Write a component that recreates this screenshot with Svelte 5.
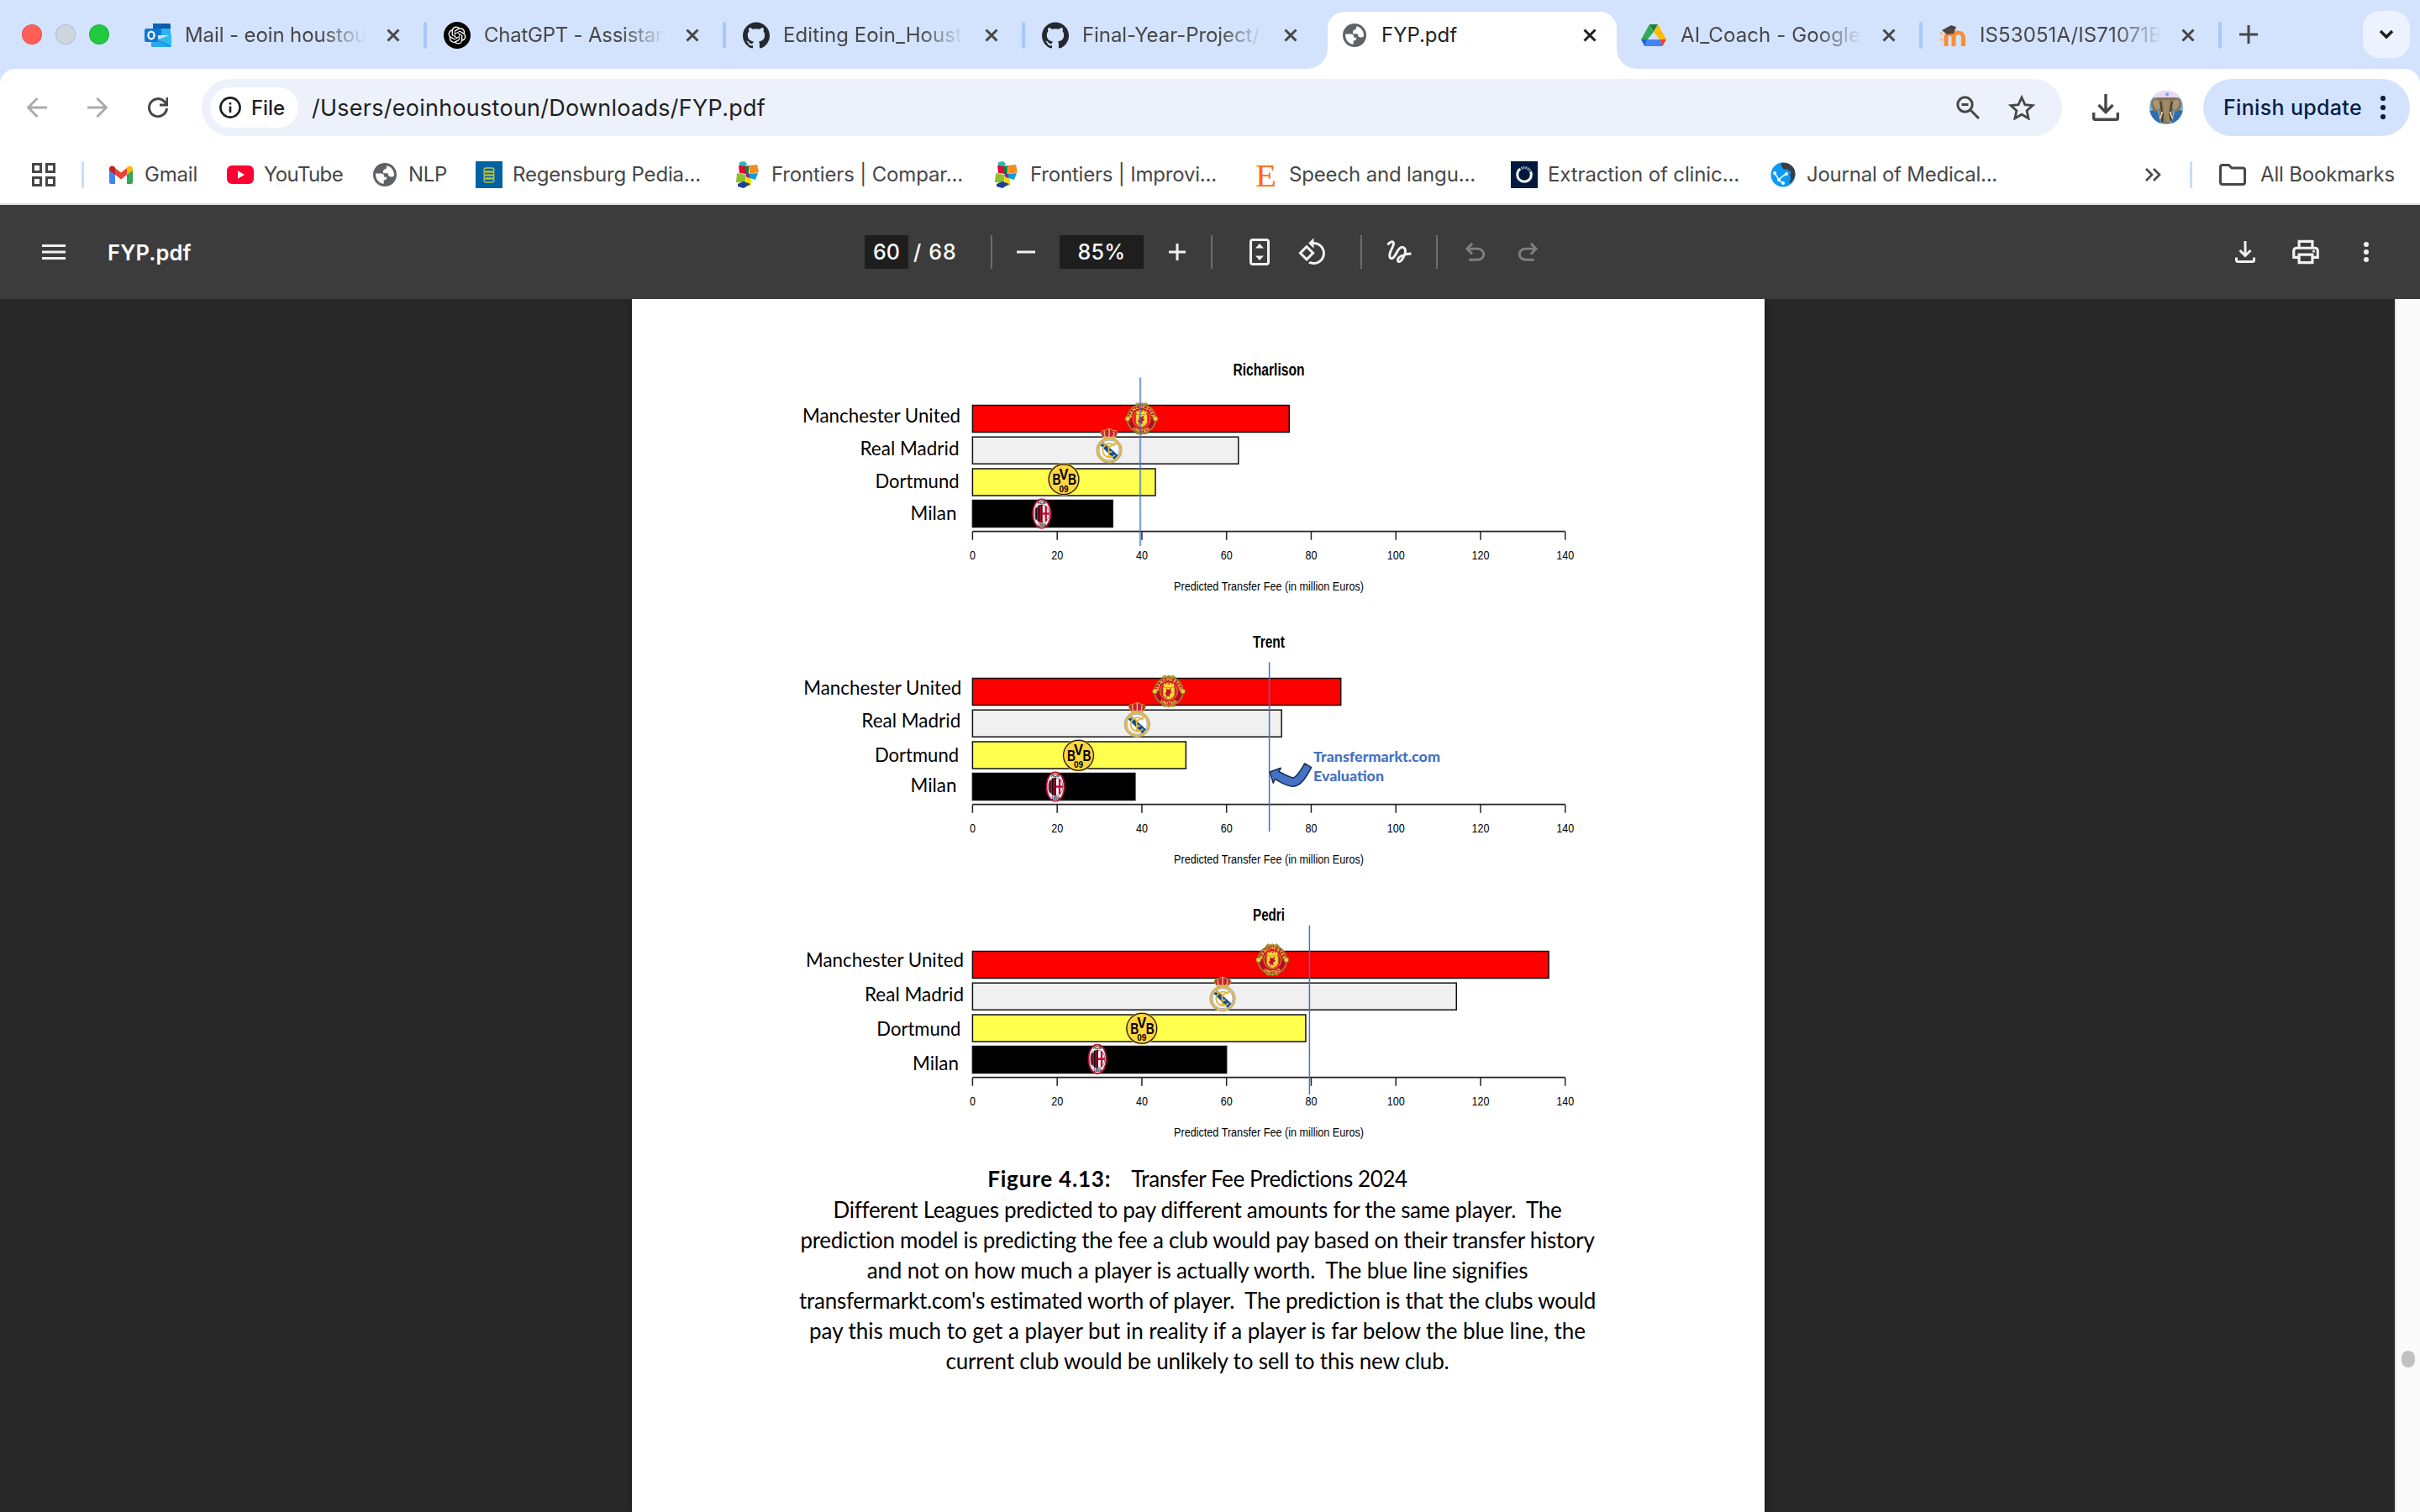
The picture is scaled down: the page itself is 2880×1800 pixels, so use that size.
<script>
  const tabs = [
    { icon: 'outlook', title: 'Mail - eoin houstou', w: 216 },
    { icon: 'chatgpt', title: 'ChatGPT - Assistan', w: 218 },
    { icon: 'github', title: 'Editing Eoin_Houst', w: 213 },
    { icon: 'github', title: 'Final-Year-Project/', w: 211, last: true },
    { icon: 'globe', title: 'FYP.pdf', w: 90, active: true },
    { icon: 'drive', title: 'AI_Coach - Google', w: 214 },
    { icon: 'moodle', title: 'IS53051A/IS71071B', w: 217 },
  ];

  const bookmarks = [
    { icon: 'gmail', title: 'Gmail', w: 63 },
    { icon: 'youtube', title: 'YouTube', w: 94 },
    { icon: 'globe', title: 'NLP', w: 46 },
    { icon: 'regensburg', title: 'Regensburg Pedia...', w: 224 },
    { icon: 'frontiers', title: 'Frontiers | Compar...', w: 228 },
    { icon: 'frontiers', title: 'Frontiers | Improvi...', w: 222 },
    { icon: 'elsevier', title: 'Speech and langu...', w: 222 },
    { icon: 'nature', title: 'Extraction of clinic...', w: 228 },
    { icon: 'jmir', title: 'Journal of Medical...', w: 227 },
  ];

  const teams = [
    { name: 'Manchester United', w: 188, fill: '#ff0000', y: 82.5 },
    { name: 'Real Madrid', w: 118, fill: '#f0f0f0', y: 120.2 },
    { name: 'Dortmund', w: 100, fill: '#ffff4d', y: 158 },
    { name: 'Milan', w: 55, fill: '#000000', y: 195.5 },
  ];

  // Label anchors are [right edge, baseline]; crests are centre points.
  const charts = [
    {
      player: 'Richarlison', pw: 85, py: 47, values: [74.8, 62.8, 43.2, 33.1],
      labels: [[391, 103], [389.5, 142], [389.5, 181], [386.5, 219.3]],
      crests: [[606.5, 98.5], [568, 131], [514, 170.7], [487.7, 211.5]],
      line: { x: 605, y1: 49.5, y2: 250, soft: true },
    },
    {
      player: 'Trent', pw: 38, py: 46, values: [87, 73, 50.4, 38.4],
      labels: [[392.3, 102], [391.3, 141.3], [389, 182.3], [386.5, 218]],
      crests: [[639, 98], [601.3, 132.2], [531.5, 174.3], [504, 211.5]],
      line: { x: 758.6, y1: 63.3, y2: 265 },
      note: true,
    },
    {
      player: 'Pedri', pw: 38, py: 46, values: [136.1, 114.3, 78.7, 60],
      labels: [[395, 101], [395, 142], [391.3, 183.3], [389, 224]],
      crests: [[762.3, 92.8], [703, 133.7], [606.8, 174.3], [554, 210.8]],
      line: { x: 806.4, y1: 51.7, y2: 253 },
    },
  ];

  const ticks = [0, 20, 40, 60, 80, 100, 120, 140];
  const sx = (v) => 405.4 + v * 5.038;

  const caption = [
    { text: 'Different Leagues predicted to pay different amounts for the same player.\u00a0 The', w: 865 },
    { text: 'prediction model is predicting the fee a club would pay based on their transfer history', w: 946 },
    { text: 'and not on how much a player is actually worth.\u00a0 The blue line signifies', w: 786 },
    { text: "transfermarkt.com's estimated worth of player.\u00a0 The prediction is that the clubs would", w: 949 },
    { text: 'pay this much to get a player but in reality if a player is far below the blue line, the', w: 924 },
    { text: 'current club would be unlikely to sell to this new club.', w: 599 },
  ];

  // Spreads the tracking of a run of text so that it fills the given width.
  function fit(node, width) {
    const natural = node.getBoundingClientRect().width;
    node.style.letterSpacing = `${(width - natural) / node.textContent.length}px`;
  }
</script>

{#snippet icon(name)}
  {#if name === 'outlook'}
    <svg class="ico" viewBox="0 0 32 32">
      <path d="M10 2h20v14H10z" fill="#0a64b4" /><path d="M10 8h10v8H10z" fill="#0f7ad4" />
      <path d="M20 8h11v8H20z" fill="#28b4f0" /><path d="M20 2h9a2 2 0 0 1 2 2v4H20z" fill="#0c59a4" />
      <path d="M8 15l12 8 12-8v13a2 2 0 0 1-2 2H10a2 2 0 0 1-2-2z" fill="#1490df" />
      <path d="M32 15v14L16 21z" fill="#32b8f2" /><path d="M8 18l22 12H10a2 2 0 0 1-2-2z" fill="#28a8ea" />
      <rect x="0" y="8" width="16" height="16" rx="2" fill="#0f78d4" />
      <ellipse cx="8" cy="16" rx="3.6" ry="4.3" fill="none" stroke="#fff" stroke-width="2.2" />
    </svg>
  {:else if name === 'chatgpt'}
    <svg class="ico" viewBox="0 0 32 32">
      <circle cx="16" cy="16" r="16" fill="#000" />
      <g transform="translate(5.5 5.5) scale(.875)" fill="#fff"><path d="M22.2819 9.8211a5.9847 5.9847 0 0 0-.5157-4.9108 6.0462 6.0462 0 0 0-6.5098-2.9A6.0651 6.0651 0 0 0 4.9807 4.1818a5.9847 5.9847 0 0 0-3.9977 2.9 6.0462 6.0462 0 0 0 .7427 7.0966 5.98 5.98 0 0 0 .511 4.9107 6.051 6.051 0 0 0 6.5146 2.9001A5.9847 5.9847 0 0 0 13.2599 24a6.0557 6.0557 0 0 0 5.7718-4.2058 5.9894 5.9894 0 0 0 3.9977-2.9001 6.0557 6.0557 0 0 0-.7475-7.0729zm-9.022 12.6081a4.4755 4.4755 0 0 1-2.8764-1.0408l.1419-.0804 4.7783-2.7582a.7948.7948 0 0 0 .3927-.6813v-6.7369l2.02 1.1686a.071.071 0 0 1 .038.052v5.5826a4.504 4.504 0 0 1-4.4945 4.4944zm-9.6607-4.1254a4.4708 4.4708 0 0 1-.5346-3.0137l.142.0852 4.783 2.7582a.7712.7712 0 0 0 .7806 0l5.8428-3.3685v2.3324a.0804.0804 0 0 1-.0332.0615L9.74 19.9502a4.4992 4.4992 0 0 1-6.1408-1.6464zM2.3408 7.8956a4.485 4.485 0 0 1 2.3655-1.9728V11.6a.7664.7664 0 0 0 .3879.6765l5.8144 3.3543-2.0201 1.1685a.0757.0757 0 0 1-.071 0l-4.8303-2.7865A4.504 4.504 0 0 1 2.3408 7.872zm16.5963 3.8558L13.1038 8.364 15.1192 7.2a.0757.0757 0 0 1 .071 0l4.8303 2.7913a4.4944 4.4944 0 0 1-.6765 8.1042v-5.6772a.79.79 0 0 0-.407-.667zm2.0107-3.0231l-.142-.0852-4.7735-2.7818a.7759.7759 0 0 0-.7854 0L9.409 9.2297V6.8974a.0662.0662 0 0 1 .0284-.0615l4.8303-2.7866a4.4992 4.4992 0 0 1 6.6802 4.66zM8.3065 12.863l-2.02-1.1638a.0804.0804 0 0 1-.038-.0567V6.0742a4.4992 4.4992 0 0 1 7.3757-3.4537l-.142.0805L8.704 5.459a.7948.7948 0 0 0-.3927.6813zm1.0976-2.3654l2.602-1.4998 2.6069 1.4998v2.9994l-2.5974 1.4997-2.6067-1.4997Z" /></g>
    </svg>
  {:else if name === 'github'}
    <svg class="ico" viewBox="0 0 24 24"><path fill="#24292f" d="M12 .297c-6.63 0-12 5.373-12 12 0 5.303 3.438 9.8 8.205 11.385.6.113.82-.258.82-.577 0-.285-.01-1.04-.015-2.04-3.338.724-4.042-1.61-4.042-1.61C4.422 18.07 3.633 17.7 3.633 17.7c-1.087-.744.084-.729.084-.729 1.205.084 1.838 1.236 1.838 1.236 1.07 1.835 2.809 1.305 3.495.998.108-.776.417-1.305.76-1.605-2.665-.3-5.466-1.332-5.466-5.93 0-1.31.465-2.38 1.235-3.22-.135-.303-.54-1.523.105-3.176 0 0 1.005-.322 3.3 1.23.96-.267 1.98-.399 3-.405 1.02.006 2.04.138 3 .405 2.28-1.552 3.285-1.23 3.285-1.23.645 1.653.24 2.873.12 3.176.765.84 1.23 1.91 1.23 3.22 0 4.61-2.805 5.625-5.475 5.92.42.36.81 1.096.81 2.22 0 1.606-.015 2.896-.015 3.286 0 .315.21.69.825.57C20.565 22.092 24 17.592 24 12.297c0-6.627-5.373-12-12-12" /></svg>
  {:else if name === 'globe'}
    <svg class="ico" viewBox="0 0 32 32">
      <circle cx="16" cy="16" r="14" fill="#5f6368" />
      <path d="M5 14.5h6.5c2.6 0 3.8 1.6 3.8 4.200h3c0 2.800-1.400 3.800-3.600 3.800v4.200C9 26.500 5 21.500 5 14.500zM18.500 5.200C24 6.500 27.200 11 27 17c-1 1.200-2.600 1.700-4 1.500-2.500-.3-3.200-2-3.300-4.300h-5.400c-1-3.500.5-5 3.200-5.300z" fill="#fff" />
    </svg>
  {:else if name === 'drive'}
    <svg class="ico" viewBox="0 0 32 32">
      <path d="M11 3h10l-5 8.700z" fill="#188038" /><path d="M11 3l5 8.700-7.300 9.300H1z" fill="#34a853" />
      <path d="M21 3l10 18h-8l-7-9.300z" fill="#fbbc04" /><path d="M1 21h8l-3.800 8z" fill="#1967d2" />
      <path d="M9 21h14l4 7.500-1.500.5H6l-1-.5z" fill="#4285f4" /><path d="M23 21h8l-4.300 7.500z" fill="#ea4335" />
    </svg>
  {:else if name === 'moodle'}
    <svg class="ico" viewBox="0 0 32 32">
      <path d="M8 29V18c0-5 9-5 9 0v11M17 18c0-7 11.500-7 11.500 1v10" fill="none" stroke="#f98e33" stroke-width="5" />
      <path d="M3 10L14 4l6 2-3 8-8 1z" fill="#4b4643" /><path d="M2.500 12v11" stroke="#f6b98e" stroke-width="2.500" stroke-dasharray="4 3" />
    </svg>
  {:else if name === 'gmail'}
    <svg class="ico" viewBox="0 0 32 32">
      <path d="M2 9v16a2 2 0 0 0 2 2h5V14z" fill="#4285f4" /><path d="M30 9v16a2 2 0 0 1-2 2h-5V14z" fill="#34a853" />
      <path d="M9 8l7 5.500L23 8v8l-7 5.500L9 16z" fill="#ea4335" />
      <path d="M2 9c0-3.500 3.500-4.500 6-2.500L9 7.500V16l-7-5.300z" fill="#c5221f" /><path d="M30 9c0-3.500-3.500-4.500-6-2.500l-1 1V16l7-5.300z" fill="#fbbc04" />
    </svg>
  {:else if name === 'youtube'}
    <svg class="ico" viewBox="0 0 32 32"><rect y="5" width="32" height="22" rx="6" fill="#ff0033" /><path d="M13 11.300v9.400l8-4.700z" fill="#fff" /></svg>
  {:else if name === 'regensburg'}
    <svg class="ico" viewBox="0 0 32 32">
      <rect width="32" height="32" fill="#0062a3" />
      <g fill="none" stroke="#b9c24a" stroke-width="1.300"><rect x="10" y="8" width="12" height="5" rx="2.500" /><rect x="10" y="12" width="12" height="5" rx="2.500" /><rect x="10" y="16" width="12" height="5" rx="2.500" /><rect x="10" y="20" width="12" height="5" rx="2.500" /></g>
    </svg>
  {:else if name === 'frontiers'}
    <svg class="ico" viewBox="0 0 32 32">
      <path d="M6 1l6-1 3 3-2 4-7-1z" fill="#2fb5b5" /><path d="M5 5l8 1 1 9-8-1z" fill="#e3062e" /><path d="M13 6l4-1v12l-4-3z" fill="#0c8043" />
      <path d="M17 5l10-1 2 9-11 2z" fill="#f68b1f" /><path d="M13 14l5 1v6l-3 4z" fill="#8c2a8c" /><path d="M18 15l10-1-3 8-7-2z" fill="#0d9ddb" />
      <path d="M3 14l10 2v10L2 25z" fill="#90c02e" /><path d="M13 18l7 3v8l-6 1z" fill="#fcd900" /><path d="M4 27l7-3 8 3-8 5-7-2z" fill="#1d419a" />
    </svg>
  {:else if name === 'elsevier'}
    <svg class="ico" viewBox="0 0 32 32"><text x="4" y="29.500" class="serif-e" textLength="25" lengthAdjust="spacingAndGlyphs">E</text></svg>
  {:else if name === 'nature'}
    <svg class="ico" viewBox="0 0 32 32">
      <rect width="32" height="32" fill="#01193c" /><circle cx="16" cy="16" r="8.300" fill="none" stroke="#fff" stroke-width="3" stroke-dasharray="34 1.500 1 1.500 1 1.500 1 1.500 1 1.500 1 1.500" />
      <circle cx="16.500" cy="16" r="9.500" fill="none" stroke="#8fa3bd" stroke-width="1" stroke-dasharray="1 1.500" />
    </svg>
  {:else if name === 'jmir'}
    <svg class="ico" viewBox="0 0 32 32">
      <circle cx="16" cy="16" r="14.500" fill="#0b9af5" />
      <path d="M14 2c7-1.500 14 2.500 16 9 1.500 6-1 12-6.500 15.500-.5-3 2.500-5 1.500-7.500-1-2-1-4 .5-6-1-2-3-1-4-3-1-1.500-3 1-5-1-2-1.500-3.500-4-2.500-7z" fill="#3a3f45" />
      <path d="M6 14l5 8 4-4 5-3M11 22l4 4" stroke="#fff" stroke-width="1.500" fill="none" />
      <g fill="#fff"><circle cx="6" cy="14" r="2" /><circle cx="11" cy="22" r="2" /><circle cx="20" cy="15" r="2" /><circle cx="16" cy="26" r="2" /></g>
    </svg>
  {/if}
{/snippet}

{#snippet crest(kind)}
  {#if kind === 0}
    <path d="M-8-16.500l3-2.500 2.500 1.500L0-19l2.500 1.500L5-19l3 2.500zM-8 16.500l3 2 2.500-1L0 19l2.500-1.500 2.500 1 3-2z" fill="#e8b92e" stroke="#8a7a1e" stroke-width="1" />
    <circle r="17" fill="#dc1428" stroke="#8f8a2c" stroke-width="1.600" />
    <circle r="13.500" fill="none" stroke="#b30c22" stroke-width="4" />
    <circle r="10.300" fill="#ee1020" stroke="#d9a928" stroke-width=".8" />
    <circle cx="-16.600" r="3" fill="#f1c63a" stroke="#7d6018" stroke-width=".8" /><circle cx="16.600" r="3" fill="#f1c63a" stroke="#7d6018" stroke-width=".8" />
    <path d="M-7-5H7V4Q6 8 0 10-6 8-7 4z" fill="#fbd933" stroke="#8d6b18" stroke-width=".8" />
    <path d="M-6-10l2 2 2-2 2 2 2-2 2 2 2-2V-5H-6z" fill="#fbd933" />
    <path d="M-3-3l3 1 3-2-1 4 2 1-3 2v4l-2-2-2 3 0-4-2-1 2-2z" fill="#c8102e" />
    <path id="arc-top" d="M-11.800-2A11.900 11.900 0 0 1 11.800-2" fill="none" /><path id="arc-bottom" d="M-16 0A16 16 0 0 0 16 0" fill="none" />
    <text class="ring"><textPath href="#arc-top" startOffset="50%" text-anchor="middle">MANCHESTER</textPath></text>
    <text class="ring wide"><textPath href="#arc-bottom" startOffset="50%" text-anchor="middle">UNITED</textPath></text>
  {:else if kind === 1}
    <circle cy="5" r="15.200" fill="#fff" stroke="#8d9bb0" stroke-width="1" />
    <circle cy="5" r="13.700" fill="#fff" stroke="#e4b63c" stroke-width="2.400" />
    <circle cy="5" r="12" fill="none" stroke="#7b93b8" stroke-width=".8" />
    <path d="M-10.500-1l3.500-4L10.500 11 6 16z" fill="#0c4f9c" />
    <path d="M-9-3.500l4.500 1M9-3.500l-5 2L0 1l-4.500-3.500M7 0a8.300 8.300 0 1 0 0 10.500M-.5 1v11.500h4M-.5 7h4" fill="none" stroke="#e4b63c" stroke-width="1.900" />
    <path d="M-7-10l-3-5q0-4 5-3.500 2.500-2 5-2t5 2q5-.5 5 3.500l-3 5z" fill="#c51f45" stroke="#d2a63a" stroke-width="1" />
    <path d="M-4.500-11q-2-3-1-6.500M0-11v-9.500M4.500-11q2-3 1-6.500M-7-10.500H7" fill="none" stroke="#e3bb52" stroke-width="1.500" />
  {:else if kind === 2}
    <circle r="19.300" fill="#ffd63e" /><circle r="17.900" fill="none" stroke="#111" stroke-width="1.200" />
    <text class="bvb" x="-13.500" y="6.500" textLength="10" lengthAdjust="spacingAndGlyphs">B</text>
    <text class="bvb" x="-5.500" y="0" textLength="11" lengthAdjust="spacingAndGlyphs">V</text>
    <text class="bvb" x="5" y="6.500" textLength="10" lengthAdjust="spacingAndGlyphs">B</text>
    <text class="bvb-year" y="15" text-anchor="middle">09</text>
  {:else}
    <ellipse rx="10.600" ry="17.200" fill="#f4f4f4" stroke="#b80b35" stroke-width="1.800" />
    <ellipse rx="8.900" ry="10.800" fill="#fff" stroke="#333" stroke-width=".6" />
    <path d="M1-10.800A8.900 10.800 0 0 0 1 10.800z" fill="#c10b38" /><path d="M-6.500-7v14M-3.200-10v20M-.1-10.500v21" stroke="#16090d" stroke-width="1.500" />
    <path d="M5-9.300v18.600M1 0h7.900" stroke="#c10b38" stroke-width="2.400" />
    <text class="acm" y="-11.500" text-anchor="middle">ACM</text><text class="acm" y="15" text-anchor="middle">1899</text>
  {/if}
{/snippet}

<div class="window">
  <div class="tabstrip">
    <div class="lights"><i class="red"></i><i class="grey"></i><i class="green"></i></div>
    {#each tabs as tab}
      <div class="tab" class:active={tab.active}>
        <span class="favicon">{@render icon(tab.icon)}</span>
        <span class="title" class:fade={!tab.active}><span class="run" use:fit={tab.w}>{tab.title}</span></span>
        <svg class="close" viewBox="0 0 16 16"><path d="M1.500 1.500l13 13m0-13l-13 13" /></svg>
        {#if !tab.active && !tab.last}<i class="divider"></i>{/if}
      </div>
    {/each}
    <svg class="plus" viewBox="0 0 22 22"><path d="M11 0v22M0 11h22" /></svg>
    <div class="tab-search"><svg width="18" height="12" viewBox="0 0 18 12"><path d="M2 2l7 7 7-7" /></svg></div>
  </div>

  <div class="chrome">
    <div class="nav">
      <div class="nav-buttons">
        <svg class="dim" viewBox="0 0 24 24"><path d="M24 12H2M12.500 1L1.500 12l11 11" /></svg>
        <svg class="dim" viewBox="0 0 24 24"><path d="M0 12h22M11.500 1l11 11-11 11" /></svg>
        <svg viewBox="0 0 24 24"><path d="M22.500 13A10.500 10.500 0 1 1 19.500 4.700L22.500 8M23 0v9h-9" /></svg>
      </div>
      <div class="omnibox">
        <div class="chip">
          <svg viewBox="0 0 26 26"><circle cx="13" cy="13" r="11.600" /><path d="M13 11.500v7.500M13 7v2.600" /></svg>
          <span class="run" use:fit={40}>File</span>
        </div>
        <span class="run url" use:fit={540}>/Users/eoinhoustoun/Downloads/FYP.pdf</span>
        <svg class="zoom-icon" viewBox="0 0 28 28"><circle cx="10.500" cy="10.500" r="8.700" /><path d="M17 17l10 10M6.500 10.500h8" /></svg>
        <svg class="star" viewBox="0 0 32 30"><path d="M16 3l3.900 8.600 9.100.9-6.900 6.200 2 9.300-8.100-4.800L7.900 28l2-9.300L3 12.500l9.100-.9z" /></svg>
      </div>
      <svg class="downloads" viewBox="0 0 32 32"><path d="M16 0v21M7.500 13l8.500 8.500L24.500 13M1.700 22v6.500q0 1.800 1.800 1.800h25q1.800 0 1.800-1.800V22" /></svg>
      <svg class="avatar" viewBox="0 0 40 40">
        <clipPath id="round"><circle cx="20" cy="20" r="20" /></clipPath>
        <g clip-path="url(#round)">
          <rect width="40" height="40" fill="#7ab5df" /><rect width="40" height="8" fill="#ecd7f2" /><path d="M0 24l9-2 5 18H0zM40 24l-9-2-5 18h14z" fill="#2f6fae" />
          <path d="M2 14q1-7 11-6h14q10-1 11 6 1 7-5 11l-4-2-2 12q-2 5-7 4-5 1-7-4l-2-12-4 2q-6-4-5-11z" fill="#84755a" />
          <path d="M4 13q4-5 8 0l1 8-4 2q-4-3-5-10zM36 13q-4-5-8 0l-1 8 4 2q4-3 5-10z" fill="#a89574" />
          <path d="M16 11h8l-1 15q0 8 3 11h-5q-4-3-4-11z" fill="#9d8b66" />
          <path d="M13 13l2 12M27 13l-2 12M16 27l-1 11M24 27l2 9" stroke="#46381f" stroke-width="1.800" fill="none" /><path d="M15 25q0 5-3 8M25 25q0 5 3 8" stroke="#f0e7d2" stroke-width="1.300" fill="none" />
          <circle cx="21" cy="4.500" r="2" fill="#6da4ff" />
        </g>
      </svg>
      <div class="update">
        <span class="run" use:fit={165}>Finish update</span>
        <svg viewBox="0 0 8 28"><circle cx="4" cy="3" r="3.100" /><circle cx="4" cy="14" r="3.100" /><circle cx="4" cy="25" r="3.100" /></svg>
      </div>
    </div>

    <div class="bookmarks">
      <svg class="apps" viewBox="0 0 28 28"><path d="M1.500 1.500h9v9h-9zM17.500 1.500h9v9h-9zM1.500 17.500h9v9h-9zM17.500 17.500h9v9h-9z" /></svg>
      <i class="bar"></i>
      <div class="bookmark-list">
        {#each bookmarks as b}
          <div class="bookmark">{@render icon(b.icon)}<span class="run" use:fit={b.w}>{b.title}</span></div>
        {/each}
      </div>
      <svg class="more" viewBox="0 0 20 16"><path d="M2 1l7 7-7 7M11 1l7 7-7 7" /></svg>
      <i class="bar"></i>
      <svg class="folder" viewBox="0 0 32 26"><path d="M1.500 22V4q0-2.500 2.500-2.500h7.500L15 5h13q2.500 0 2.500 2.500V22q0 2.500-2.500 2.500H4Q1.500 24.500 1.500 22z" /></svg>
      <span class="run" use:fit={160}>All Bookmarks</span>
    </div>
  </div>

  <div class="pdfbar">
    <svg class="menu" viewBox="0 0 28 18"><path d="M0 1.500h28M0 9h28M0 16.500h28" /></svg>
    <span class="run doc" use:fit={103}>FYP.pdf</span>
    <div class="controls">
      <span class="box"><span class="run" use:fit={32}>60</span></span>
      <span class="total"><span class="run" use:fit={52}>/ 68</span></span>
      <i></i>
      <svg width="22" height="4" viewBox="0 0 22 4"><path class="w3" d="M0 2h22" /></svg>
      <span class="box"><span class="run" use:fit={57}>85%</span></span>
      <svg width="20" height="20" viewBox="0 0 20 20"><path class="w3" d="M0 10h20M10 0v20" /></svg>
      <i></i>
      <span></span>
      <svg width="24" height="32" viewBox="0 0 24 32"><rect class="w3" x="1.500" y="1.500" width="21" height="29" rx="2.500" /><path class="solid" d="M12 6l5 5.500H7zM12 26l5-5.500H7z" /></svg>
      <svg width="38" height="36" viewBox="0 0 24 24"><path class="solid" d="M7.340 6.410L.86 12.900l6.490 6.480 6.490-6.480-6.500-6.490zM3.690 12.900l3.660-3.660L11 12.900l-3.660 3.660-3.650-3.660zm15.670-6.260C17.610 4.880 15.300 4 13 4V.76L8.760 5 13 9.240V6c1.790 0 3.580.68 4.950 2.050 2.730 2.730 2.730 7.170 0 9.900C16.580 19.320 14.790 20 13 20c-.97 0-1.940-.21-2.840-.61l-1.490 1.490C10.020 21.620 11.510 22 13 22c2.300 0 4.610-.88 6.360-2.640 3.520-3.510 3.520-9.210 0-12.720z" /></svg>
      <span></span>
      <i></i>
      <svg width="30" height="28" viewBox="0 0 30 28"><path class="w3" d="M1.500 5.500C3 2.500 8 0 8.500 3.500 9 7.500 2 15 4 20c2.500 5 6.500-2 8-5s4.500-8 8-6.500c5 2.500 1.500 9.500-.5 13-2.500 4.500-6 5.500-6 2 0-4 8-7.500 16-7.500" /></svg>
      <i></i>
      <svg class="off" width="35" height="35" viewBox="0 0 24 24"><path class="solid" d="M7 19v-2h7.100q1.575 0 2.738-1T18 13.500 16.838 11 14.100 10H7.800l2.600 2.600L9 14 4 9l5-5 1.400 1.400L7.800 8h6.300q2.425 0 4.163 1.575T20 13.500t-1.737 3.925T14.100 19z" /></svg>
      <svg class="off" width="35" height="35" viewBox="0 0 24 24"><path class="solid" transform="matrix(-1 0 0 1 24 0)" d="M7 19v-2h7.100q1.575 0 2.738-1T18 13.500 16.838 11 14.100 10H7.800l2.600 2.600L9 14 4 9l5-5 1.400 1.400L7.800 8h6.300q2.425 0 4.163 1.575T20 13.500t-1.737 3.925T14.100 19z" /></svg>
    </div>
    <div class="actions">
      <svg width="24" height="26" viewBox="0 0 24 26"><path class="w3" d="M12 0v17M5.500 11l6.500 6.500 6.500-6.500M1.500 19.500v3q0 2 2 2h17q2 0 2-2v-3" /></svg>
      <svg width="38" height="38" viewBox="0 0 24 24"><path class="solid" fill-rule="evenodd" d="M16 8V5H8v3H6V3h12v5zM18 12.500q.425 0 .713-.288T19 11.500t-.288-.712T18 10.500t-.712.288T17 11.500t.288.713.712.287M16 19v-4H8v4zm2 2H6v-4H2v-6q0-1.275.875-2.137T5 8h14q1.275 0 2.138.863T22 11v6h-4zm2-6v-4q0-.425-.287-.712T19 10H5q-.425 0-.712.288T4 11v4h2v-2h12v2z" /></svg>
      <svg width="8" height="26" viewBox="0 0 8 26"><circle class="solid" cx="4" cy="4" r="3" /><circle class="solid" cx="4" cy="13" r="3" /><circle class="solid" cx="4" cy="22" r="3" /></svg>
    </div>
  </div>

  <div class="viewer">
    <div class="page">
      {#each charts as c}
        <svg class="chart" viewBox="0 0 1348 325">
          <text class="player" x={758 - c.pw / 2} y={c.py} textLength={c.pw} lengthAdjust="spacingAndGlyphs">{c.player}</text>
          {#each teams as t, i}
            <text class="team" x={c.labels[i][0] - t.w} y={c.labels[i][1]} textLength={t.w} lengthAdjust="spacingAndGlyphs">{t.name}</text>
            <rect class="value" x={sx(0)} y={t.y} width={c.values[i] * 5.038} height="32" fill={t.fill} />
          {/each}
          <path class="axis" d="M{sx(0)} 232.700H{sx(140)}" />
          {#each ticks as v}
            <path class="axis thin" d="M{sx(v)} 232.700v10" />
            <text class="tick" x={sx(v) - String(v).length * 3.500} y="266.300" textLength={String(v).length * 7} lengthAdjust="spacingAndGlyphs">{v}</text>
          {/each}
          <text class="tick" x="645" y="302.500" textLength="226" lengthAdjust="spacingAndGlyphs">Predicted Transfer Fee (in million Euros)</text>
          {#each c.crests as [cx, cy], i}
            <g transform="translate({cx} {cy})">{@render crest(i)}</g>
          {/each}
          <path class="worth" class:soft={c.line.soft} d="M{c.line.x} {c.line.y1}V{c.line.y2}" />
          {#if c.note}
            <path class="arrow" d="M759 194l13.300-4.700-2.300 4.400c7 3 12 6.500 17.300 7.300 5-2 9-10 13.400-17l8 4.700c-6 11-12 22-22.400 22.600-8-.3-14-5-21-9l-2 5z" />
            <text class="note" x="811" y="181.700" textLength="151" lengthAdjust="spacingAndGlyphs">Transfermarkt.com</text>
            <text class="note" x="811" y="205" textLength="84" lengthAdjust="spacingAndGlyphs">Evaluation</text>
          {/if}
        </svg>
      {/each}
      <div class="caption">
        <p class="head"><b class="run" use:fit={147}>Figure 4.13:</b><span class="run" use:fit={329}>Transfer Fee Predictions 2024</span></p>
        {#each caption as line}
          <p><span class="run" use:fit={line.w}>{line.text}</span></p>
        {/each}
      </div>
    </div>
    <div class="scrollbar"><i></i></div>
  </div>
</div>

<style>
  :global(body) { margin: 0; overflow: hidden; }
  .window { width: 2880px; height: 1800px; display: flex; flex-direction: column; overflow: hidden; background: #d3e3fd; font-family: Inter, 'Liberation Sans', sans-serif; }
  svg { display: block; flex: none; fill: none; }
  .run { display: inline-block; white-space: pre; flex: none; }
  .ico { width: 32px; height: 32px; overflow: visible; }

  .tabstrip { height: 82px; flex: none; display: flex; align-items: center; }
  .lights { width: 126px; padding-left: 26px; display: flex; gap: 16px; flex: none; }
  .lights i { width: 24px; height: 24px; border-radius: 50%; box-sizing: border-box; border: 1px solid rgba(0, 0, 0, .12); }
  .red { background: #ff5f57; }
  .grey { background: #ced6e0; }
  .green { background: #22c940; }
  .tab { width: 356px; height: 68px; margin-top: 14px; padding: 0 0 12px 20px; box-sizing: border-box; display: flex; align-items: center; position: relative; flex: none; color: #474747; font-size: 24px; }
  .tab .title { width: 220px; margin-left: 16px; overflow: hidden; line-height: 34px; }
  .fade { -webkit-mask-image: linear-gradient(90deg, #000 74%, transparent 98%); mask-image: linear-gradient(90deg, #000 74%, transparent 98%); }
  .close { width: 16px; height: 16px; margin-left: 20px; stroke: #474747; stroke-width: 3; }
  .divider { width: 4px; height: 32px; border-radius: 2px; background: #a8c7fa; margin-left: auto; }
  .active { color: #1f1f1f; }
  .active .close { stroke: #1f1f1f; }
  .active::before { content: ''; position: absolute; left: 4px; right: 8px; top: 0; bottom: 0; background: #fff; border-radius: 20px 20px 0 0; }
  .active::after { content: ''; position: absolute; left: -20px; right: -16px; bottom: 0; height: 24px; background: radial-gradient(circle at 0 0, transparent 23.500px, #fff 24px) left / 24px 24px no-repeat, radial-gradient(circle at 100% 0, transparent 23.500px, #fff 24px) right / 24px 24px no-repeat; }
  .active > * { position: relative; z-index: 1; }
  .plus { width: 22px; height: 22px; margin-left: 21px; stroke: #474747; stroke-width: 3; }
  .tab-search { width: 56px; height: 56px; margin-left: auto; margin-right: 12px; border-radius: 20px; background: #ecf2fe; display: grid; place-items: center; }
  .tab-search svg { stroke: #1f1f1f; stroke-width: 3.500; }

  .chrome { height: 160px; flex: none; background: #fff; border-radius: 18px 18px 0 0; border-bottom: 2px solid #dfe1e0; }
  .nav { height: 68px; padding: 12px 12px 0 32px; display: flex; align-items: center; }
  .nav-buttons { display: flex; gap: 48px; width: 208px; flex: none; }
  .nav-buttons svg { width: 24px; height: 24px; stroke: #474747; stroke-width: 3; }
  .nav-buttons .dim { stroke: #ababab; }
  .omnibox { width: 2214px; height: 68px; border-radius: 34px; background: #ecf1fb; display: flex; align-items: center; padding: 0 32px 0 10px; box-sizing: border-box; flex: none; }
  .chip { width: 105px; height: 48px; border-radius: 24px; background: #fff; display: flex; align-items: center; gap: 12px; padding-left: 11px; box-sizing: border-box; font-size: 24px; font-weight: 500; color: #1f1f1f; }
  .chip svg { width: 26px; height: 26px; stroke: #1f1f1f; stroke-width: 2.600; }
  .url { margin-left: 16px; font-size: 27px; color: #1f1f1f; }
  .zoom-icon { width: 28px; height: 28px; margin-left: auto; stroke: #474747; stroke-width: 3; }
  .star { width: 32px; height: 30px; margin-left: 34px; stroke: #474747; stroke-width: 2.800; }
  .downloads { width: 32px; height: 32px; margin-left: 36px; stroke: #474747; stroke-width: 3.400; }
  .avatar { width: 40px; height: 40px; margin-left: 36px; }
  .update { width: 246px; height: 68px; margin-left: 24px; border-radius: 34px; background: #d3e3fd; color: #041e49; font-size: 25px; font-weight: 500; display: flex; align-items: center; padding-left: 24px; box-sizing: border-box; }
  .update svg { width: 8px; height: 28px; margin-left: 21px; fill: #041e49; }

  .bookmarks { height: 80px; padding-top: 11px; box-sizing: border-box; display: flex; align-items: center; padding-left: 38px; font-size: 24px; color: #474747; }
  .apps { width: 28px; height: 28px; stroke: #474747; stroke-width: 3; }
  .bar { width: 3px; height: 32px; border-radius: 2px; background: #c9dcfb; margin-left: 31px; flex: none; }
  .bookmark-list { display: grid; grid-template-columns: 142px 172px 124px repeat(6, 308px); margin-left: 28px; width: 2286px; flex: none; }
  .bookmark { display: flex; align-items: center; gap: 12px; }
  .more { width: 20px; height: 16px; margin-left: 138px; stroke: #474747; stroke-width: 2.600; }
  .more + .bar { margin-left: 34px; }
  .folder { width: 32px; height: 26px; margin: 0 17px 0 32px; stroke: #474747; stroke-width: 3; }
  .serif-e { font: 38px 'Liberation Serif', serif; fill: #ff6c0c; }

  .pdfbar { height: 112px; flex: none; background: #3c3c3c; color: #fff; display: flex; align-items: center; position: relative; z-index: 1; }
  .pdfbar svg { stroke: none; }
  .w3, .menu path { stroke: #f1f1f1; stroke-width: 3; }
  .solid { fill: #f1f1f1; }
  .off { opacity: .37; }
  .menu { width: 28px; height: 18px; margin-left: 50px; }
  .doc { margin-left: 50px; width: 102px; font-size: 25.500px; font-weight: 600; }
  .controls { margin-left: 799px; height: 40px; display: grid; grid-template-columns: 52px 98px 2px 80px 100px 80px 2px 21px 70px 56px 29px 2px 88px 2px 89px 37px; place-items: center; font-size: 25px; font-weight: 500; }
  .controls i { width: 2px; height: 40px; background: #6f6f6f; }
  .controls .box { width: 100%; height: 40px; background: #1e1e1e; display: grid; place-items: center; }
  .total { justify-self: start; padding-left: 6px; }
  .actions { margin-left: auto; display: flex; align-items: center; padding-right: 60px; }
  .actions svg:nth-child(2) { margin: 0 49px 0 41px; }

  .viewer { flex: 1; min-height: 0; background: #282828; display: flex; justify-content: flex-end; }
  .page { width: 1348px; margin-right: 750px; padding-top: 44px; box-sizing: border-box; background: #fff; box-shadow: 0 0 8px rgba(0, 0, 0, .45); }
  .scrollbar { width: 30px; box-sizing: border-box; background: #fafafa; border-left: 2px solid #e6e6e6; display: flex; flex-direction: column; align-items: center; justify-content: flex-end; }
  .scrollbar i { width: 16px; height: 20px; border-radius: 8px; background: #c1c1c1; margin-bottom: 172px; }

  .chart { width: 1348px; height: 325px; }
  .chart text { fill: #000; font-family: 'Liberation Sans', sans-serif; }
  .chart .player { font-size: 20px; font-weight: 700; }
  .chart .team { font: 23.500px Lato, sans-serif; }
  .chart .tick { font-size: 15.500px; }
  .chart .note { font: 900 17.500px Lato, sans-serif; fill: #4472c4; }
  .value { stroke: #111; stroke-width: 1.500; }
  .axis { stroke: #222; stroke-width: 1.800; }
  .thin { stroke-width: 1.500; }
  .worth { stroke: #4472c4; stroke-width: 1.500; }
  .soft { stroke-width: 2.400; opacity: .65; }
  .arrow { fill: #4472c4; stroke: #172c51; stroke-width: 1.500; stroke-linejoin: round; }
  .chart .ring { font-size: 5.200px; font-weight: 700; fill: #ffe24a; }
  .chart .wide { letter-spacing: .5px; }
  .chart .bvb { font-size: 19px; font-weight: 700; }
  .chart .bvb-year { font-size: 10px; font-weight: 700; }
  .chart .acm { font-size: 4.500px; font-weight: 700; fill: #222; }

  .caption { padding-top: 10px; font: 26px/36px Lato, sans-serif; color: #000; }
  .caption p { margin: 0 2px 0 0; height: 36px; display: flex; justify-content: center; }
  .caption .head { gap: 24px; height: 37px; }
</style>
